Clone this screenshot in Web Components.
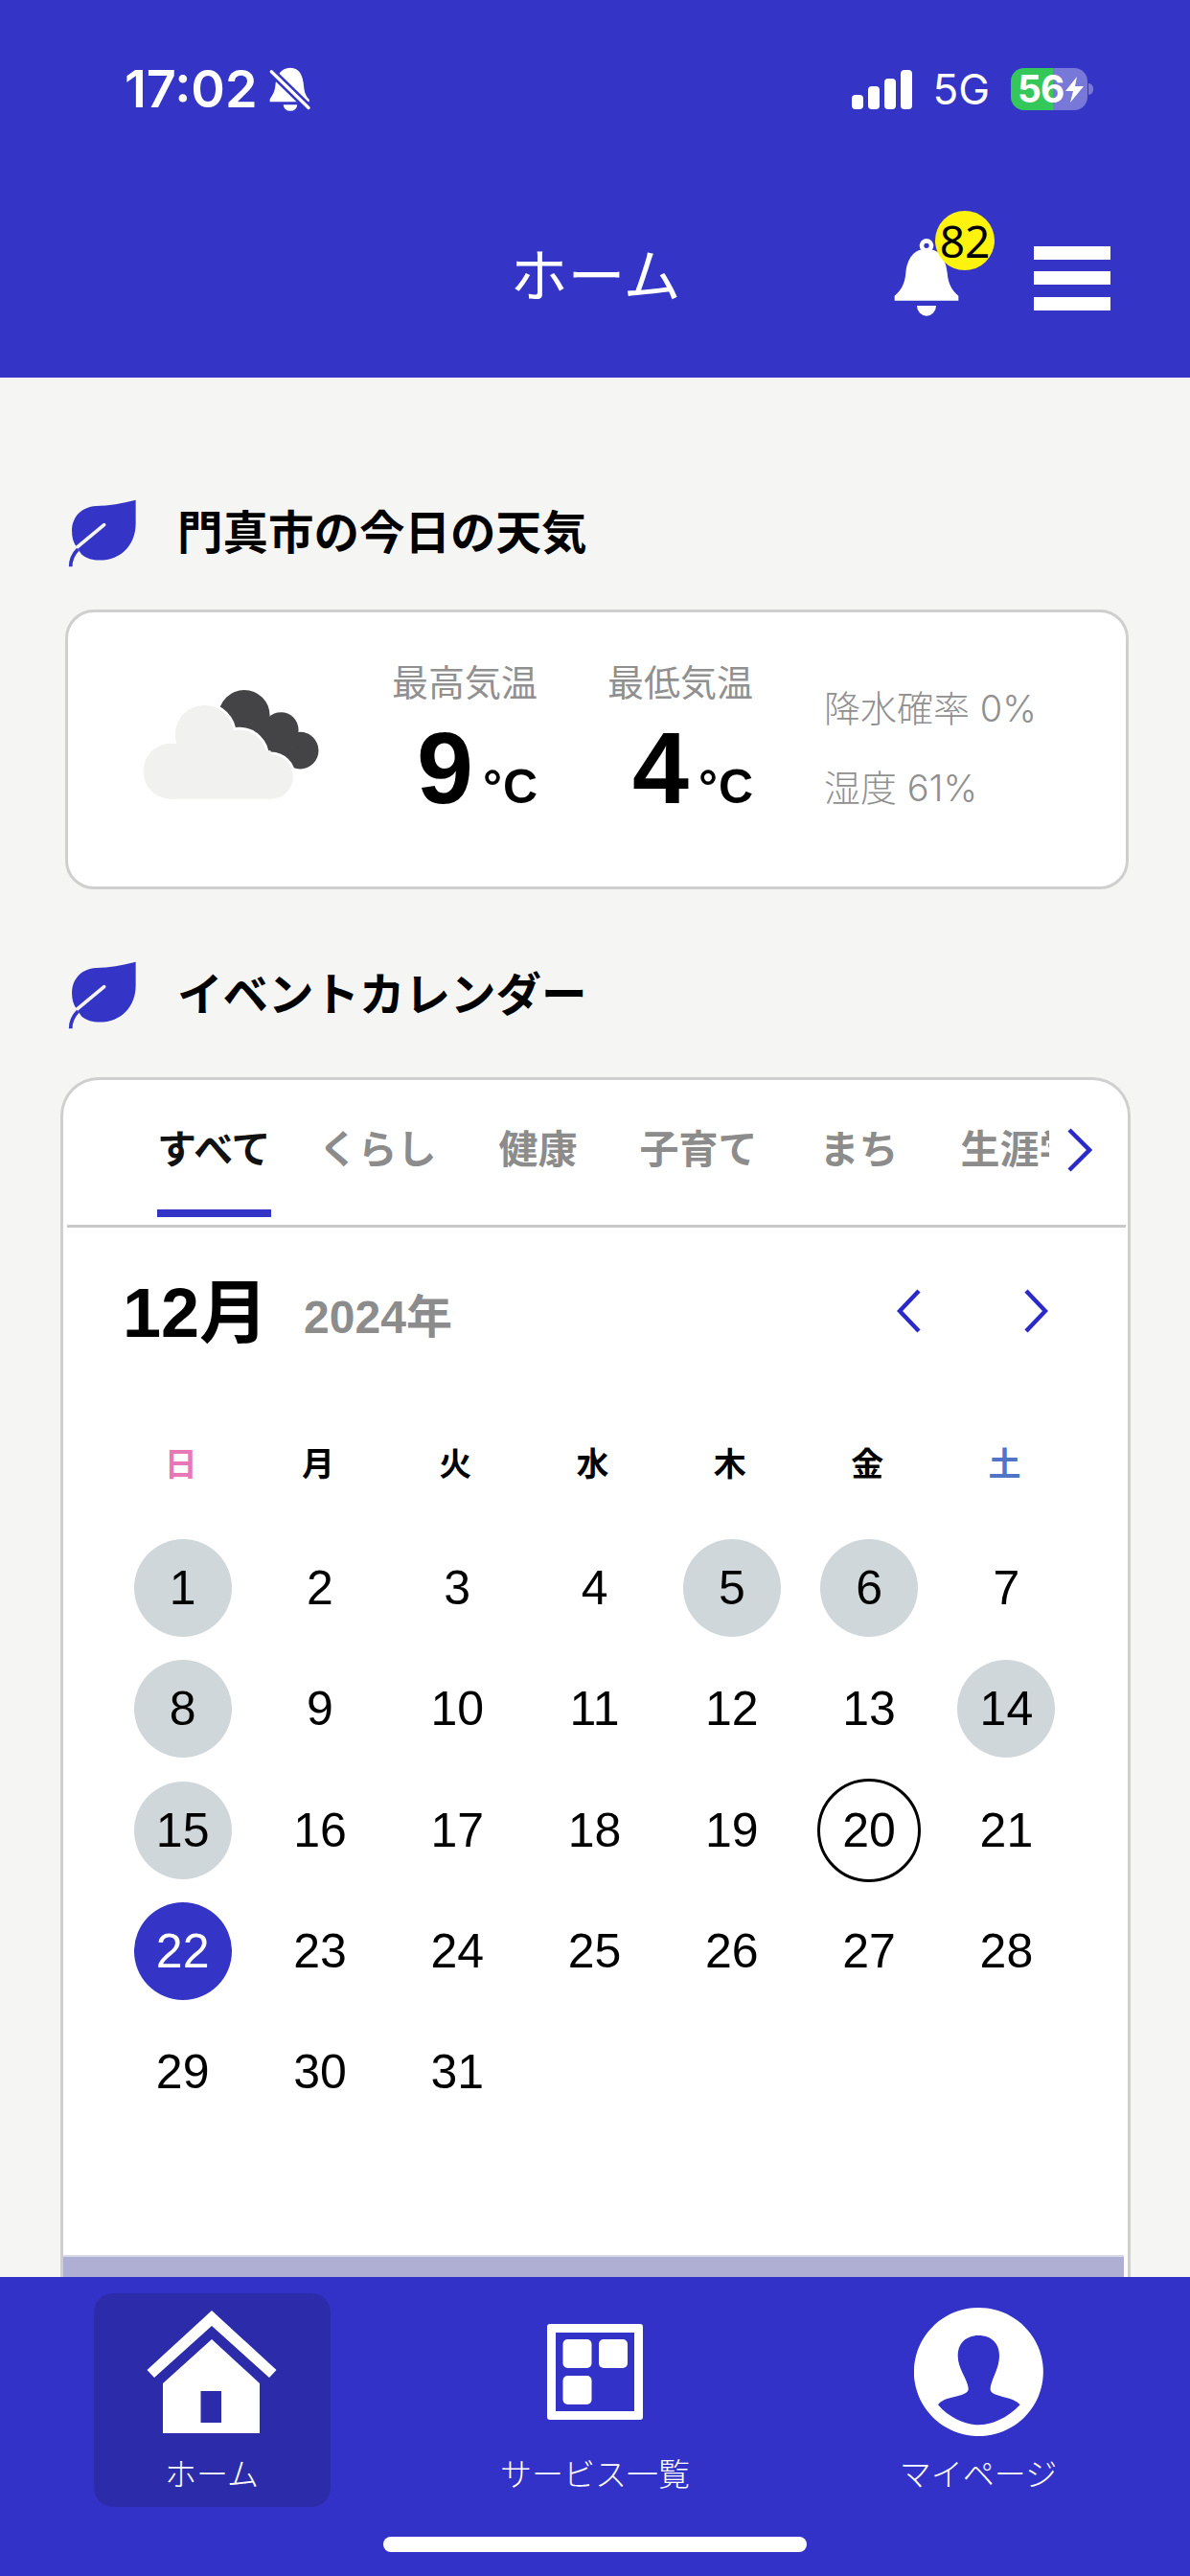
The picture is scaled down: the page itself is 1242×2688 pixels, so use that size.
<!DOCTYPE html>
<html lang="ja">
<head>
<meta charset="utf-8">
<title>ホーム</title>
<style>
  html, body {
    margin: 0;
    height: 2688px;
    overflow: hidden;
    background: #f5f5f3;
    font-family: "Liberation Sans", "Noto Sans CJK JP", sans-serif;
  }
  app-shell { --blue: #3434c6; }
</style>
</head>
<body>
<app-shell>
  <app-header slot="header" title-text="ホーム" count="82"></app-header>

  <section-title>門真市の今日の天気</section-title>
  <weather-card></weather-card>

  <section-title class="second">イベントカレンダー</section-title>
  <event-calendar></event-calendar>

  <bottom-nav slot="footer">
    <nav-item active label="ホーム">
      <svg width="140" height="132" viewBox="0 0 140 132" fill="#fff">
        <path d="M70 2 L2.5 64 L10 72 L70 18 L130 72 L137.500 64 Z"/>
        <path fill-rule="evenodd" d="M70 32 L19 78 V130 H120 V78 Z M58.500 86 H80 V119 H58.500 Z"/>
      </svg>
    </nav-item>
    <nav-item label="サービス一覧">
      <svg width="100" height="100" viewBox="0 0 100 100" fill="#fff">
        <path fill-rule="evenodd" d="M3 0 H97 A3 3 0 0 1 100 3 V97 A3 3 0 0 1 97 100 H3 A3 3 0 0 1 0 97 V3 A3 3 0 0 1 3 0 Z M9 9 V91 H91 V9 Z"/>
        <rect x="16.500" y="16" width="30" height="30" rx="5"/>
        <rect x="54" y="16" width="30" height="30" rx="5"/>
        <rect x="16.500" y="54" width="30" height="30" rx="5"/>
      </svg>
    </nav-item>
    <nav-item label="マイページ">
      <svg width="135" height="134" viewBox="158 78 405 402">
        <path fill="#fff" fill-rule="evenodd" d="M360 78 A202.500 201 0 1 0 360.100 78 Z M360 165 C320 165 295 190 295 228 C295 270 325 300 328 330 C330 345 310 350 285 357 C260 362 240 370 233 382 C270 425 320 445 360 445 C400 445 450 425 490 382 C480 370 460 362 435 357 C410 350 395 345 397 330 C400 300 425 270 425 228 C425 190 400 165 360 165 Z"/>
      </svg>
    </nav-item>
  </bottom-nav>
</app-shell>

<template id="shell-template">
  <style>
    :host { display: flex; flex-direction: column; height: 2688px; }
    main { flex: 1; min-height: 0; overflow: hidden; padding-top: 120px; box-sizing: border-box; }
  </style>
  <slot name="header"></slot>
  <main><slot></slot></main>
  <slot name="footer"></slot>
</template>

<template id="header-template">
  <style>
    :host { display: block; background: var(--blue); color: #fff; height: 394px; overflow: hidden; }
    .status {
      display: flex;
      align-items: center;
      justify-content: space-between;
      height: 66px;
      margin-top: 60px;
      padding: 0 101px 0 130px;
    }
    .left, .right { display: flex; align-items: center; }
    .time { font: 600 54px/66px Inter, sans-serif; margin-right: 11px; }
    .net { font: 400 44px/66px Inter, sans-serif; margin: 0 22px 0 21px; }
    .battery {
      display: flex;
      align-items: center;
      box-sizing: border-box;
      width: 80px;
      height: 44px;
      padding-left: 7px;
      border-radius: 14px;
      background: linear-gradient(90deg, #34c759 55%, #7878d8 55%);
      font: 700 39px/44px Inter, sans-serif;
      letter-spacing: -1px;
    }
    .battery svg { margin-left: 2px; }
    .tip { width: 5px; height: 12px; margin-left: 1px; background: #7878d8; border-radius: 0 5px 5px 0; }
    .bar {
      display: grid;
      grid-template-columns: 1fr auto 1fr;
      align-items: center;
      height: 164px;
      margin-top: 82px;
      padding: 0 83px 0 84px;
    }
    h1 { margin: 0; font-size: 60px; font-weight: 400; line-height: 80px; }
    .actions { display: flex; align-items: center; justify-content: flex-end; gap: 77px; }
    .bell { position: relative; width: 70px; height: 84px; }
    .bell svg { display: block; }
    .badge {
      position: absolute;
      left: 44px;
      top: -28px;
      width: 62px;
      height: 62px;
      border-radius: 50%;
      background: #fdf30f;
      color: #000;
      font: 400 46px/62px "Noto Sans", sans-serif;
      text-align: center;
    }
    .menu { display: flex; flex-direction: column; gap: 12.500px; width: 80px; }
    .menu i { display: block; height: 14px; background: #fff; }
  </style>
  <div class="status">
    <div class="left">
      <span class="time">17:02</span>
      <svg width="46" height="48" viewBox="530 55 140 145">
        <path fill="#fff" d="M600 60 C570 60 555 85 552 120 C550 140 540 150 535 160 V168 H660 V160 C650 150 645 140 643 120 C640 85 630 60 600 60 Z"/>
        <path fill="#fff" d="M578 177 H622 A22 20 0 0 1 578 177 Z"/>
        <line x1="540" y1="72" x2="658" y2="187" stroke="#3434c6" stroke-width="26"/>
        <line x1="540" y1="72" x2="658" y2="187" stroke="#fff" stroke-width="10" stroke-linecap="round"/>
      </svg>
    </div>
    <div class="right">
      <svg width="63" height="41" viewBox="0 0 63 41" fill="#fff">
        <rect x="0" y="26" width="12" height="15" rx="4"/>
        <rect x="17" y="17" width="12" height="24" rx="4"/>
        <rect x="34" y="9" width="12" height="32" rx="4"/>
        <rect x="51" y="0" width="12" height="41" rx="4"/>
      </svg>
      <span class="net">5G</span>
      <div class="battery">
        <span>56</span>
        <svg width="19" height="27" viewBox="0 0 19 27" fill="#fff"><path d="M12 0 L0 15 H8 L5 27 L19 10 H10 Z"/></svg>
      </div>
      <div class="tip"></div>
    </div>
  </div>
  <div class="bar">
    <span></span>
    <h1 id="title"></h1>
    <div class="actions">
      <div class="bell">
        <svg width="70" height="84" viewBox="95 115 210 252" fill="#fff">
          <circle cx="200" cy="140" r="15" fill="none" stroke="#fff" stroke-width="14"/>
          <path d="M200 150 C160 150 140 180 135 225 C132 260 120 280 100 297 V312 H300 V297 C280 280 268 260 265 225 C260 180 240 150 200 150 Z"/>
          <path d="M170 328 H230 A30 32 0 0 1 170 328 Z"/>
        </svg>
        <div class="badge" id="count"></div>
      </div>
      <div class="menu"><i></i><i></i><i></i></div>
    </div>
  </div>
</template>

<template id="title-template">
  <style>
    :host { display: flex; align-items: center; height: 84px; padding-left: 70px; }
    :host(.second) { margin-top: 68px; }
    svg { flex: none; width: 74px; height: 74px; margin-right: 41px; }
    h2 { margin: 0; padding-top: 2px; font-size: 47.500px; line-height: 82px; font-weight: 700; color: #000; }
  </style>
  <svg viewBox="30 55 220 220">
    <path fill="#3434c6" d="M243 63 C200 75 160 80 120 82 C75 85 45 115 45 160 C45 180 50 195 58 207 L75 232 C90 245 110 250 130 250 C200 250 243 200 243 135 Z"/>
    <path fill="none" stroke="#f5f5f3" stroke-width="11" stroke-linecap="round" d="M145 140 L58 212"/>
    <path fill="none" stroke="#3434c6" stroke-width="11" d="M64 216 C50 230 41 245 41 270"/>
  </svg>
  <h2><slot></slot></h2>
</template>

<template id="weather-template">
  <style>
    :host {
      display: flex;
      box-sizing: border-box;
      width: 1110px;
      height: 292px;
      margin: 38px 0 0 68px;
      padding: 51px 0 0 59px;
      background: #fff;
      border: 3px solid #cfcfcf;
      border-radius: 30px;
      color: #909090;
    }
    svg { flex: none; }
    .temp { width: 153px; margin-left: 59px; }
    .temp + .temp { margin-left: 72px; }
    .label { font-size: 38px; line-height: 46px; white-space: nowrap; }
    .value {
      display: flex;
      justify-content: flex-end;
      align-items: baseline;
      height: 100px;
      margin-top: 15px;
      color: #000;
      font-size: 106px;
      line-height: 100px;
      font-weight: 700;
    }
    .value small { font-size: 50px; margin-left: 10px; letter-spacing: 1px; }
    .side { margin: 25px 0 0 73px; font: 300 38px/48px Inter, "Noto Sans CJK JP", sans-serif; white-space: nowrap; }
    .side div + div { margin-top: 35px; }
  </style>
  <svg width="220" height="163" viewBox="0 0 660 490">
    <g fill="#444446">
      <circle cx="375" cy="170" r="80"/>
      <circle cx="490" cy="215" r="55"/>
      <circle cx="550" cy="280" r="58"/>
      <path d="M305 145 L375 170 L490 215 L550 280 L530 337 L450 290 L352 230 Z"/>
    </g>
    <g fill="#fff" stroke="#fff" stroke-width="16">
      <circle cx="250" cy="230" r="92"/>
      <circle cx="360" cy="300" r="85"/>
      <circle cx="458" cy="362" r="70"/>
    </g>
    <g fill="#f1f1ef">
      <circle cx="145" cy="345" r="87"/>
      <circle cx="250" cy="230" r="92"/>
      <circle cx="360" cy="300" r="85"/>
      <circle cx="458" cy="362" r="70"/>
      <rect x="145" y="280" width="313" height="152"/>
    </g>
  </svg>
  <div class="temp"><div class="label">最高気温</div><div class="value">9<small>°C</small></div></div>
  <div class="temp"><div class="label">最低気温</div><div class="value">4<small>°C</small></div></div>
  <div class="side"><div>降水確率 0%</div><div>湿度 61%</div></div>
</template>

<template id="calendar-template">
  <style>
    :host {
      display: block;
      box-sizing: border-box;
      width: 1117px;
      margin: 44px 0 0 63px;
      background: #fff;
      border: 3px solid #cfcfcf;
      border-bottom: 0;
      border-radius: 40px 40px 0 0;
    }
    .tabs { display: flex; align-items: flex-start; height: 151px; border-bottom: 3px solid #c8c8c8; margin: 0 2px 0 4px; }
    .scroller { display: flex; flex: none; width: 931px; margin-left: 94px; overflow: hidden; }
    .tab {
      flex: none;
      margin-right: 65px;
      padding: 45px 0 34px;
      color: #8c8c8c;
      font-size: 41px;
      line-height: 56px;
      font-weight: 700;
    }
    .tab.active { color: #111; margin-right: 50px; border-bottom: 8px solid #3434c6; }
    .tabs svg { flex: none; margin: 50px 0 0 18px; }
    .month { display: flex; align-items: center; height: 90px; margin-top: 44px; padding-left: 62px; }
    .month b { font-size: 72px; line-height: 90px; color: #000; }
    .month span { margin-left: 37px; font-size: 48px; font-weight: 700; color: #8c8c8c; }
    .arrows { display: flex; gap: 106px; margin-left: auto; margin-right: 83px; transform: translateY(-2px); }
    .week, .days { display: grid; grid-template-columns: repeat(7, 143.300px); margin-left: 53px; }
    .week { margin-top: 88px; text-align: center; font-size: 34px; line-height: 50px; font-weight: 700; color: #000; }
    .week div:first-child { color: #e877b8; }
    .week div:last-child { color: #4f74c8; }
    .week div { transform: translateX(-2px); }
    .days { margin-top: 41px; grid-auto-rows: 126.300px; }
    .day { display: flex; align-items: center; justify-content: center; }
    .day span {
      display: flex;
      align-items: center;
      justify-content: center;
      flex: none;
      width: 102px;
      height: 102px;
      border-radius: 50%;
      font-size: 50px;
      color: #000;
    }
    .day.event span { background: #d0d7da; }
    .day.selected span { background: #3434c6; color: #fff; }
    .day.today span { box-sizing: border-box; width: 108px; height: 108px; border: 3px solid #000; }
    .more { height: 60px; margin: 128px 4px 0 0; background: #afafd4; border-top: 2px solid #d8d8e6; }
  </style>
  <div class="tabs">
    <div class="scroller" id="tabs"></div>
    <svg width="27" height="46" viewBox="0 0 27 46"><path d="M3 2 L24 23 L3 44" fill="none" stroke="#2a2acb" stroke-width="4.500"/></svg>
  </div>
  <div class="month">
    <b>12月</b><span>2024年</span>
    <div class="arrows">
      <svg width="26" height="46" viewBox="0 0 26 46"><path d="M23 2 L3 23 L23 44" fill="none" stroke="#2a2acb" stroke-width="4.500"/></svg>
      <svg width="26" height="46" viewBox="0 0 26 46"><path d="M3 2 L23 23 L3 44" fill="none" stroke="#2a2acb" stroke-width="4.500"/></svg>
    </div>
  </div>
  <div class="week" id="week"></div>
  <div class="days" id="days"></div>
  <div class="more"></div>
</template>

<template id="nav-template">
  <style>
    :host { display: block; height: 312px; background: #3232c8; color: #fff; overflow: hidden; }
    .row { display: grid; grid-template-columns: repeat(3, 400px); padding: 17px 21px 0; }
    .home-line { width: 442px; height: 16px; margin: 31px auto 0; border-radius: 8px; background: #fff; }
  </style>
  <div class="row"><slot></slot></div>
  <div class="home-line"></div>
</template>

<template id="nav-item-template">
  <style>
    :host {
      display: flex;
      flex-direction: column;
      align-items: center;
      justify-self: center;
      width: 247px;
      height: 223px;
      border-radius: 20px;
    }
    :host([active]) { background: #2c2cab; }
    .icon { display: flex; align-items: center; justify-content: center; height: 164px; }
    .label { margin-top: 4px; font-size: 33px; line-height: 44px; font-weight: 300; white-space: nowrap; }
  </style>
  <div class="icon"><slot></slot></div>
  <div class="label" id="label"></div>
</template>

<script>
// attach a shadow root cloned from one of the templates above
function shadowFrom(element, id) {
  const shadow = element.attachShadow({ mode: "open" });
  shadow.append(document.getElementById(id).content.cloneNode(true));
  return shadow;
}

class AppShell extends HTMLElement {
  constructor() {
    super();
    shadowFrom(this, "shell-template");
  }
}

class AppHeader extends HTMLElement {
  constructor() {
    super();
    shadowFrom(this, "header-template");
  }

  connectedCallback() {
    this.shadowRoot.getElementById("title").textContent = this.getAttribute("title-text");
    this.shadowRoot.getElementById("count").textContent = this.getAttribute("count");
  }
}

class SectionTitle extends HTMLElement {
  constructor() {
    super();
    shadowFrom(this, "title-template");
  }
}

class WeatherCard extends HTMLElement {
  constructor() {
    super();
    shadowFrom(this, "weather-template");
  }
}

class EventCalendar extends HTMLElement {
  constructor() {
    super();
    shadowFrom(this, "calendar-template");
  }

  connectedCallback() {
    const root = this.shadowRoot;

    // the last tab runs under the arrow and gets cut off
    const tabs = ["すべて", "くらし", "健康", "子育て", "まち", "生涯学習"];
    root.getElementById("tabs").innerHTML = tabs
      .map((tab, i) => `<div class="tab ${i === 0 ? "active" : ""}">${tab}</div>`)
      .join("");

    root.getElementById("week").innerHTML = ["日", "月", "火", "水", "木", "金", "土"]
      .map((day) => `<div>${day}</div>`)
      .join("");

    // december 2024 starts on a sunday, so no leading blanks
    const events = [1, 5, 6, 8, 14, 15];
    let days = "";
    for (let day = 1; day <= 31; day++) {
      let kind = "";
      if (events.includes(day)) kind = "event";
      if (day === 20) kind = "today";
      if (day === 22) kind = "selected";
      days += `<div class="day ${kind}"><span>${day}</span></div>`;
    }
    root.getElementById("days").innerHTML = days;
  }
}

class BottomNav extends HTMLElement {
  constructor() {
    super();
    shadowFrom(this, "nav-template");
  }
}

class NavItem extends HTMLElement {
  constructor() {
    super();
    shadowFrom(this, "nav-item-template");
  }

  connectedCallback() {
    this.shadowRoot.getElementById("label").textContent = this.getAttribute("label");
  }
}

customElements.define("app-shell", AppShell);
customElements.define("app-header", AppHeader);
customElements.define("section-title", SectionTitle);
customElements.define("weather-card", WeatherCard);
customElements.define("event-calendar", EventCalendar);
customElements.define("bottom-nav", BottomNav);
customElements.define("nav-item", NavItem);
</script>
</body>
</html>
